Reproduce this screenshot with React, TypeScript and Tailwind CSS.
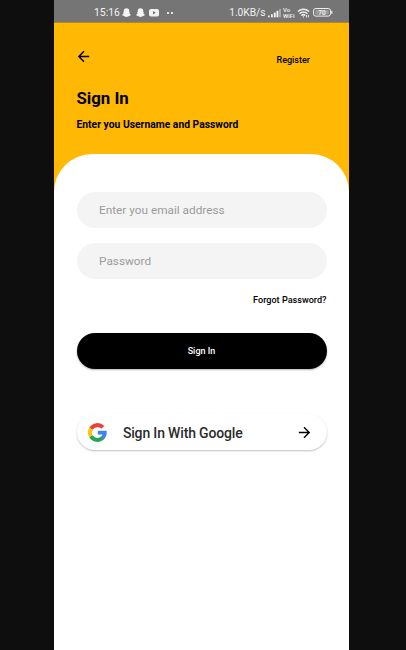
import React from "react";
import { MdArrowBack, MdArrowForward } from "react-icons/md";

function GhostIcon({ className }: { className: string }) {
  return (
    <svg className={`h-[9px] w-[9px] shrink-0 ${className}`} viewBox="0 0 18 18" fill="#f4f4f4">
      <path d="M9 .5C5.2.5 3.500 2.700 3.500 5.300V8L2 8.300C2 9.500 3.500 9.600 3.200 10.400 2.700 11.900 1.500 12.800 0 13.300 .5 15 2.500 15 3.500 15.800 5 15.600 6.500 17.800 9 17.800S13 15.600 14.500 15.800C15.500 15 17.500 15 18 13.300 16.500 12.800 15.300 11.900 14.800 10.400 14.500 9.600 16 9.500 16 8.300L14.500 8V5.300C14.500 2.700 12.800.5 9 .5z" />
    </svg>
  );
}

function SignalIcon() {
  return (
    <svg className="ml-[2px] h-[10px] w-[14px] shrink-0" viewBox="0 0 14 10" fill="#f1f1f1">
      <rect x="0" y="7.5" width="1.6" height="1.8" />
      <rect x="3" y="6.3" width="1.8" height="3" />
      <rect x="5.8" y="4.6" width="1.9" height="4.7" />
      <rect x="8.5" y="2.8" width="1.9" height="6.5" />
      <rect x="11.2" y="1" width="1.6" height="8.3" opacity="0.5" />
    </svg>
  );
}

function WifiIcon() {
  return (
    <svg className="ml-[2.5px] h-[10px] w-[13px] shrink-0" viewBox="0 0 13 10" fill="none" stroke="#f1f1f1" strokeWidth="1.5">
      <path d="M.8 3.500Q6.500-.9 12.200 3.500" />
      <path d="M2.600 5.600Q6.500 2.400 10.400 5.600" />
      <path d="M4.400 7.500Q6.500 5.800 8.200 7.400" />
      <circle cx="6.400" cy="8.900" r=".7" fill="#f1f1f1" stroke="none" />
      <path d="M9.400 7v2.400M11.300 7v2.400" strokeWidth="1" />
    </svg>
  );
}

function YoutubeIcon() {
  return (
    <svg className="ml-[4.5px] h-[8px] w-[10px] shrink-0" viewBox="0 0 10 8">
      <rect width="10" height="7.500" rx="2" fill="#f1f1f1" />
      <path d="M4 2.100v3.400L6.800 3.800z" fill="#757575" />
    </svg>
  );
}

function StatusBar() {
  return (
    <div className="flex h-[23px] shrink-0 items-center border-b border-[#b18a1c] bg-[#757575] pt-[3px] pr-[16px] pl-[40px] text-[#f1f1f1]">
      <span className="w-[26px] pt-[2px] text-[10.4px] leading-none">15:16</span>
      <GhostIcon className="ml-[2px]" />
      <GhostIcon className="ml-[4.5px]" />
      <YoutubeIcon />
      <span className="ml-[7.5px] flex gap-[2px]">
        <i className="size-[2px] bg-[#e4e4e4]" />
        <i className="size-[2px] bg-[#e4e4e4]" />
      </span>
      <span className="ml-auto pt-[2px] text-[10.2px] leading-none whitespace-nowrap">1.0KB/s</span>
      <SignalIcon />
      <span className="ml-[1.5px] flex w-[11.5px] flex-col text-[6px] leading-[6px] font-medium">
        <span>Vo</span>
        <span>WiFi</span>
      </span>
      <WifiIcon />
      <svg className="ml-[3px] h-[9px] w-[20px] shrink-0" viewBox="0 0 20 9">
        <rect x=".5" y=".5" width="17" height="7.6" rx="2.300" fill="none" stroke="#f1f1f1" />
        <rect x="2.200" y="2" width="13.600" height="4.600" rx=".8" fill="#9b9b9b" />
        <rect x="18.200" y="2.800" width="1.300" height="3" fill="#e2e2e2" />
        <text x="9" y="6.700" textAnchor="middle" fontSize="6.500" fontWeight="500" fill="#f4f4f4">70</text>
      </svg>
    </div>
  );
}

function GoogleLogo() {
  return (
    <svg className="size-[19px] shrink-0" viewBox="0 0 38 38" fill="none" strokeWidth="8">
      <path stroke="#EA4335" d="M6 11.500A15 15 0 0 1 29.700 8.900" />
      <path stroke="#FFC107" d="M6 26.500A15 15 0 0 1 6 11.500" />
      <path stroke="#21A453" d="M29 30A15 15 0 0 1 6 26.500" />
      <path fill="#3D82F0" d="M19.500 15.500H37.200C38.200 22.500 36.200 28.500 31.600 32.800L25.300 28C27.300 26.700 28.600 24.900 29 23.200H19.500z" />
    </svg>
  );
}

export default function App() {
  return (
    <div className="h-[650px] w-[406px] overflow-hidden bg-[#0e0e0e] pl-[54px] font-['Roboto',sans-serif]">
      <main className="flex h-full w-[295px] flex-col bg-[#ffb803]">
        <StatusBar />
        <header className="h-[130.5px] shrink-0 px-[22.5px] pt-[25px] text-black">
          <div className="flex h-[20px] items-start justify-between pr-[16.5px]">
            <MdArrowBack className="-ml-[1.5px] size-[17px]" />
            <button className="mt-[6px] text-[9px] leading-[12px] font-medium">Register</button>
          </div>
          <h1 className="mt-[19.4px] text-[16.8px] leading-[22px] font-bold">Sign In</h1>
          <p className="mt-[8.6px] text-[10.35px] leading-[13px] font-bold whitespace-nowrap">Enter you Username and Password</p>
        </header>
        <form className="flex flex-1 flex-col rounded-t-[38px] bg-white px-[22.5px] pt-[38px]" onSubmit={(e) => e.preventDefault()}>
          <input
            type="email"
            placeholder="Enter you email address"
            className="h-[36px] w-[250px] rounded-full bg-[#f4f4f4] px-[22.5px] text-[11.8px] outline-none placeholder:text-[#9b9b9b]"
          />
          <input
            type="password"
            placeholder="Password"
            className="mt-[15px] h-[36px] w-[250px] rounded-full bg-[#f4f4f4] px-[22.5px] text-[11.8px] outline-none placeholder:text-[#9b9b9b]"
          />
          <button type="button" className="mt-[15.5px] self-end text-[9.1px] leading-[12px] font-medium text-black">
            Forgot Password?
          </button>
          <button className="mt-[27px] h-[36px] w-[250px] rounded-full bg-black pt-[2px] text-[9px] font-medium text-white shadow-[0_1px_2px_rgba(0,0,0,0.3)]">
            Sign In
          </button>
          <button type="button" className="mt-[45px] flex h-[36px] w-[250px] items-center rounded-full bg-white pr-[13.5px] pl-[11.4px] text-black shadow-[0_1px_2px_rgba(0,0,0,0.25)]">
            <GoogleLogo />
            <span className="ml-[16px] pt-[2px] text-[14px] font-medium tracking-[-0.16px] whitespace-nowrap text-[#2b2b2b]">Sign In With Google</span>
            <MdArrowForward className="ml-auto size-[17px]" />
          </button>
        </form>
      </main>
    </div>
  );
}
